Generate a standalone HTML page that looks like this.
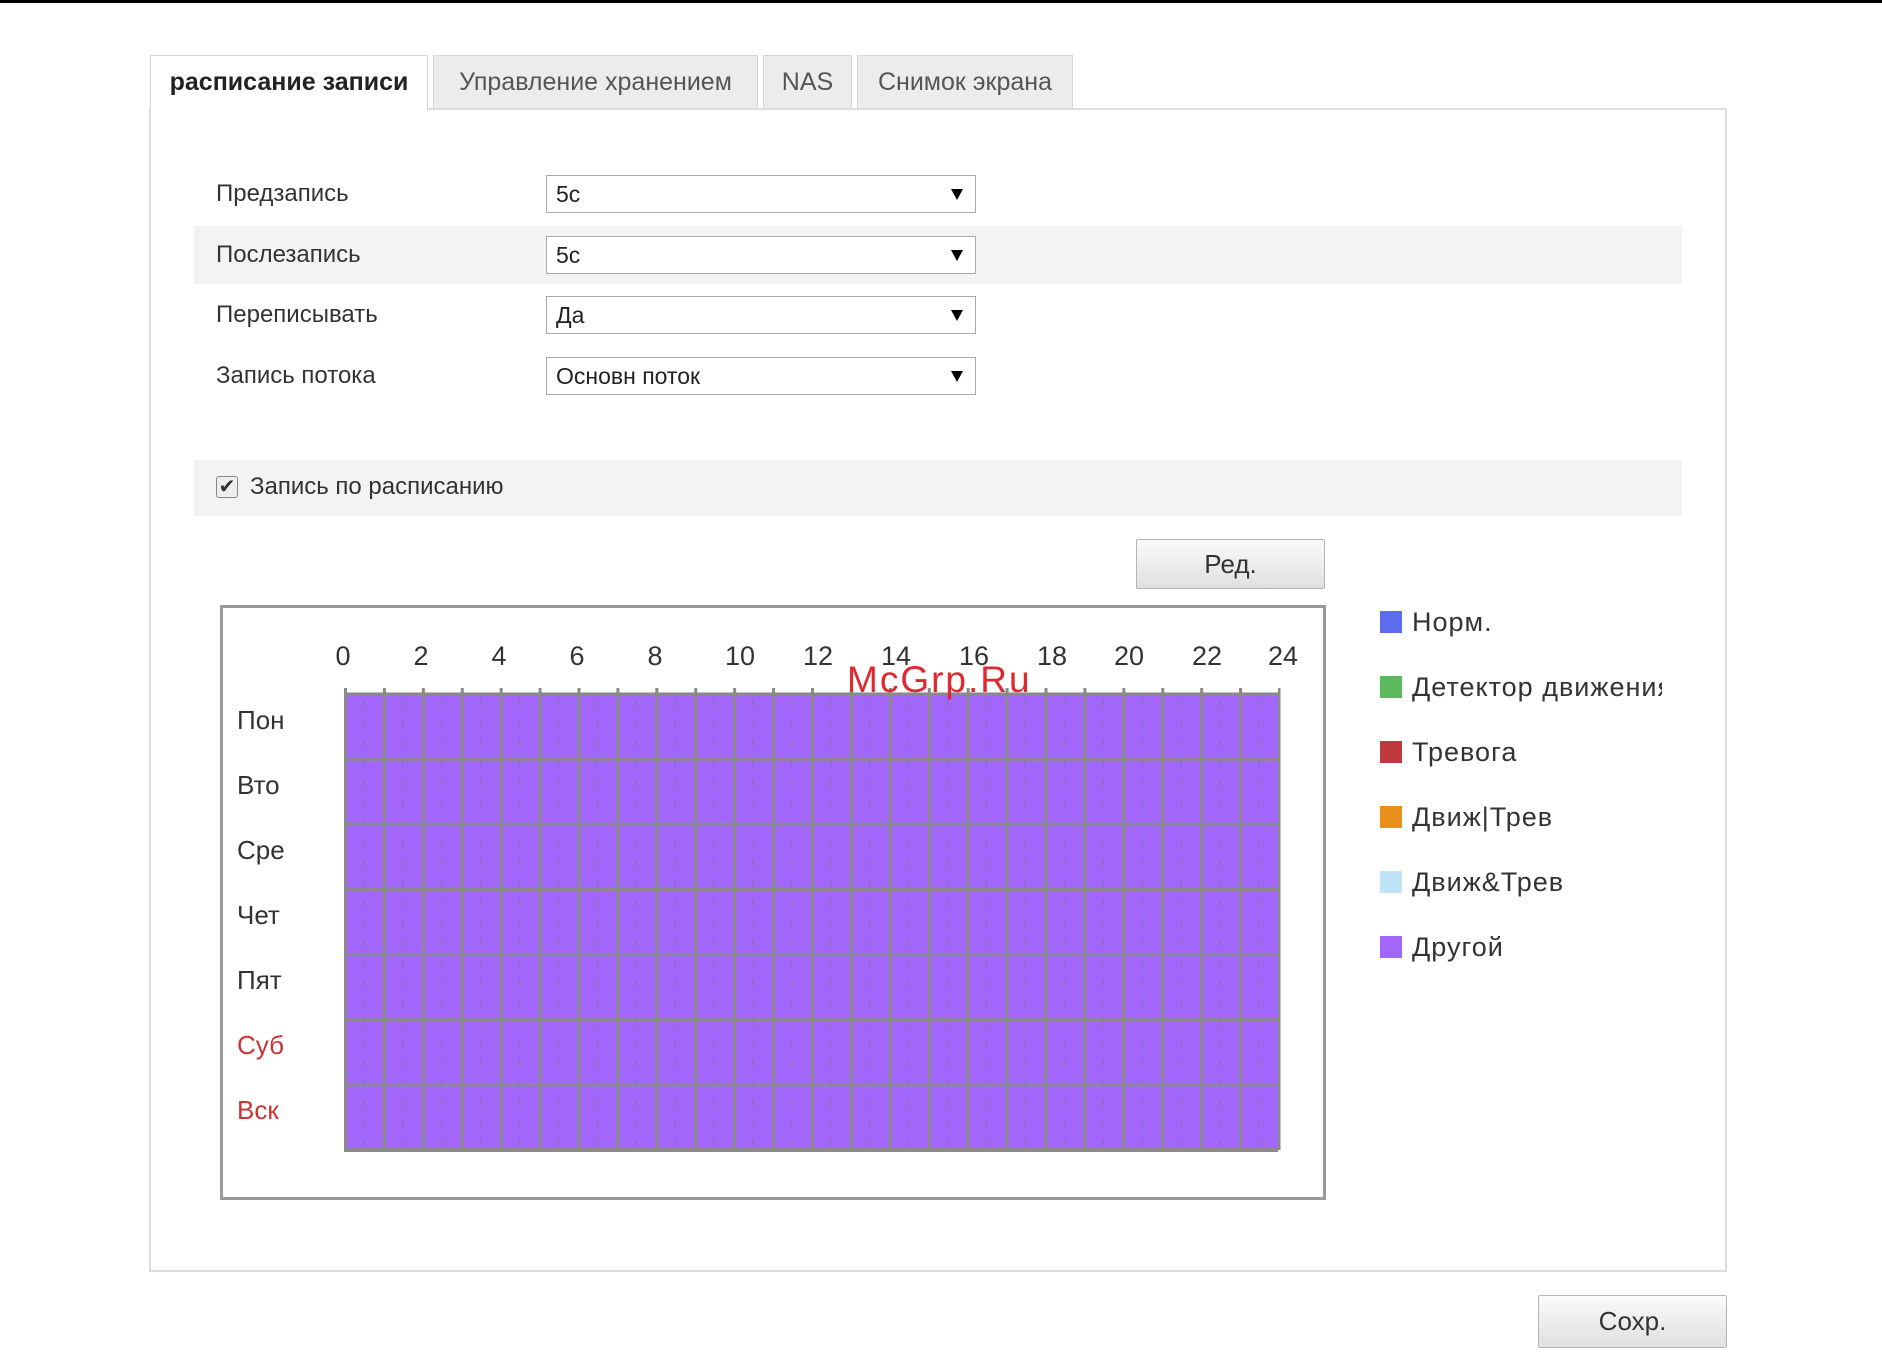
<!DOCTYPE html>
<html><head><meta charset="utf-8"><style>
body{margin:0;width:1882px;height:1356px;background:#fff;position:relative;overflow:hidden;font-family:"Liberation Sans",sans-serif;color:#333}
.a{position:absolute}
.tab{position:absolute;top:55px;height:53px;background:#ececec;border:1px solid #d6d6d6;border-bottom:none;box-sizing:border-box;font-size:25px;color:#555;line-height:52px;text-align:center}
.lbl{position:absolute;left:216px;font-size:24px;color:#333}
.sel{position:absolute;left:546px;width:430px;height:38px;border:1px solid #aaa;box-sizing:border-box;background:#fff;font-size:23px;line-height:36px;padding-left:9px;color:#222}
.sel:after{content:"";position:absolute;right:12px;top:13px;border-left:6px solid transparent;border-right:6px solid transparent;border-top:11px solid #000}
.btn{position:absolute;background:linear-gradient(#fafafa,#e0e0e0);border:1px solid #b5b5b5;box-sizing:border-box;font-size:26px;text-align:center;color:#333;border-radius:2px}
.lg{position:absolute;left:1380px;width:22px;height:22px}
.lt{position:absolute;left:1412px;font-size:27px;color:#333;letter-spacing:1px}
</style></head><body>
<div class="a" style="left:0;top:0;width:1882px;height:3px;background:#000"></div>
<div class="a" style="left:149px;top:108px;width:1578px;height:1164px;border:2px solid #dcdcdc;box-sizing:border-box"></div>
<div class="tab" style="left:150px;width:278px;height:56px;background:#fff;color:#222;font-weight:bold">расписание записи</div>
<div class="tab" style="left:433px;width:325px">Управление хранением</div>
<div class="tab" style="left:763px;width:89px">NAS</div>
<div class="tab" style="left:857px;width:216px">Снимок экрана</div>
<div class="a" style="left:194px;top:226px;width:1488px;height:58px;background:#f3f3f3"></div>
<div class="lbl" style="top:180px">Предзапись</div><div class="sel" style="top:175px">5с</div>
<div class="lbl" style="top:241px">Послезапись</div><div class="sel" style="top:236px">5с</div>
<div class="lbl" style="top:301px">Переписывать</div><div class="sel" style="top:296px">Да</div>
<div class="lbl" style="top:362px">Запись потока</div><div class="sel" style="top:357px">Основн поток</div>
<div class="a" style="left:194px;top:460px;width:1488px;height:56px;background:#f3f3f3"></div>
<div class="a" style="left:216px;top:476px;width:22px;height:22px;border:1px solid #888;border-radius:3px;background:#eee;box-sizing:border-box;font-size:20px;line-height:20px;text-align:center">✔</div>
<div class="lbl" style="left:250px;top:473px">Запись по расписанию</div>
<div class="btn" style="left:1136px;top:539px;width:189px;height:50px;line-height:48px">Ред.</div>
<div class="a" style="left:220px;top:605px;width:1106px;height:595px;border:3px solid #999;box-sizing:border-box"></div>
<svg class="a" style="left:0;top:0" width="1882" height="1356">
<defs>
<pattern id="pv" x="344" y="0" width="38.917" height="20" patternUnits="userSpaceOnUse">
<rect x="0" y="0" width="3" height="20" fill="#8a8a8a"/>
<rect x="19" y="0" width="1.5" height="6" fill="#8873b0"/>
</pattern>
<pattern id="ph" x="0" y="694" width="20" height="65.143" patternUnits="userSpaceOnUse">
<rect x="0" y="-1.5" width="20" height="3" fill="#8a8a8a"/>
<rect x="0" y="63.6" width="20" height="3" fill="#8a8a8a"/>
</pattern>
</defs>
<g font-family="Liberation Sans,sans-serif" font-size="27" fill="#333" text-anchor="middle">
<text x="343" y="665">0</text><text x="421" y="665">2</text><text x="499" y="665">4</text><text x="577" y="665">6</text><text x="655" y="665">8</text><text x="740" y="665">10</text><text x="818" y="665">12</text><text x="896" y="665">14</text><text x="974" y="665">16</text><text x="1052" y="665">18</text><text x="1129" y="665">20</text><text x="1207" y="665">22</text><text x="1283" y="665">24</text>
</g>
<rect x="344" y="694" width="934" height="456" fill="#a366fb"/>
<rect x="342.5" y="688" width="938" height="462" fill="url(#pv)"/>
<rect x="344" y="692" width="934" height="460" fill="url(#ph)"/>
<rect x="344" y="1148" width="934" height="4" fill="#8a8a8a"/>
<g font-family="Liberation Sans,sans-serif" font-size="26" fill="#333">
<text x="237" y="729">Пон</text><text x="237" y="794">Вто</text><text x="237" y="859">Сре</text><text x="237" y="924">Чет</text><text x="237" y="989">Пят</text>
<text x="237" y="1054" fill="#cc3333">Суб</text><text x="237" y="1119" fill="#cc3333">Вск</text>
</g>
<text x="847" y="692" font-family="Liberation Sans,sans-serif" font-size="37" fill="#e0282e" letter-spacing="2">McGrp.Ru</text>
</svg>
<div class="lg" style="top:611px;background:#5c6cf0"></div><div class="lt" style="top:607px">Норм.</div>
<div class="lg" style="top:676px;background:#5cb85c"></div><div class="lt" style="top:672px;width:250px;overflow:hidden;white-space:nowrap">Детектор движения</div>
<div class="lg" style="top:741px;background:#c0393f"></div><div class="lt" style="top:737px">Тревога</div>
<div class="lg" style="top:806px;background:#e8901a"></div><div class="lt" style="top:802px">Движ|Трев</div>
<div class="lg" style="top:871px;background:#bfe3f8"></div><div class="lt" style="top:867px">Движ&amp;Трев</div>
<div class="lg" style="top:936px;background:#a366fb"></div><div class="lt" style="top:932px">Другой</div>
<div class="btn" style="left:1538px;top:1295px;width:189px;height:53px;line-height:51px">Сохр.</div>
</body></html>
